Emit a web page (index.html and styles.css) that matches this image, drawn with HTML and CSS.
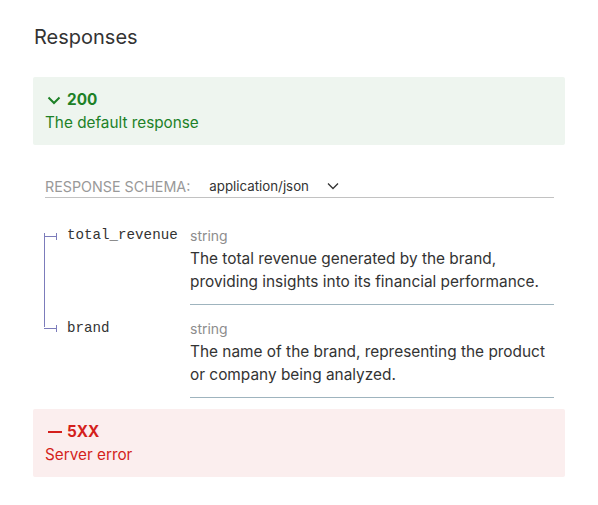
FILE: index.html
```html
<!DOCTYPE html>
<html>
<head>
<meta charset="utf-8">
<link rel="stylesheet" href="styles.css">
</head>
<body>
<div class="page">
  <h3 class="title">Responses</h3>

  <div class="resp resp-ok">
    <div class="resp-head">
      <svg class="resp-icon" width="14" height="9" viewBox="0 0 14 9"><path d="M1.5 1.5 L7 7 L12.5 1.5" fill="none" stroke="#1d8127" stroke-width="2"/></svg>
      <strong>200</strong>
    </div>
    <div class="resp-desc">The default response</div>
  </div>

  <div class="schema">
    <div class="schema-bar">
      <span class="schema-label">RESPONSE SCHEMA:</span>
      <span class="schema-type">application/json</span>
      <svg class="schema-caret" width="12" height="8" viewBox="0 0 12 8"><path d="M1 1.5 L6 6.5 L11 1.5" fill="none" stroke="#333" stroke-width="1.3"/></svg>
    </div>

    <table class="props">
      <tr class="prop first">
        <td class="prop-name"><span class="bullet"></span><span class="name">total_revenue</span></td>
        <td class="prop-info">
          <div class="type">string</div>
          <div class="desc">The total revenue generated by the brand, providing insights into its financial performance.</div>
        </td>
      </tr>
      <tr class="prop last">
        <td class="prop-name"><span class="bullet"></span><span class="name">brand</span></td>
        <td class="prop-info">
          <div class="type">string</div>
          <div class="desc">The name of the brand, representing the product or company being analyzed.</div>
        </td>
      </tr>
    </table>
  </div>

  <div class="resp resp-err">
    <div class="resp-head">
      <span class="dash"></span>
      <strong>5XX</strong>
    </div>
    <div class="resp-desc">Server error</div>
  </div>
</div>
</body>
</html>
```

FILE: styles.css
```css
html, body {
  margin: 0;
  padding: 0;
  background: #fff;
}
body {
  font-family: Inter, "Noto Sans", sans-serif;
  color: #333;
}
.page {
  padding: 22px 33px 20px 33px;
}
.title {
  margin: 0 0 25px 1px;
  font-size: 20px;
  line-height: 30px;
  font-weight: 400;
  color: #333;
}
.resp {
  border-radius: 2px;
  padding: 12px 12px 11px 12px;
  font-size: 15.3px;
  line-height: 23px;
}
.resp-ok {
  background: #eef5ef;
  color: #1d8127;
}
.resp-err {
  background: #fbeeee;
  color: #d41f1c;
  margin-top: 11px;
}
.resp-head {
  display: flex;
  align-items: center;
  line-height: 22px;
}
.resp-head strong {
  font-weight: 700;
}
.resp-icon {
  margin: 0 6px 0 2px;
}
.dash {
  display: inline-block;
  width: 14px;
  height: 2px;
  background: #d41f1c;
  margin: 0 5px 0 3px;
}
.schema {
  padding: 0 11px 0 12px;
  margin-top: 30px;
}
.schema-bar {
  display: flex;
  align-items: center;
  height: 22px;
  border-bottom: 1px solid #c2c2c2;
}
.schema-label {
  font-size: 14.3px;
  color: #999;
  text-transform: uppercase;
}
.schema-type {
  font-size: 13.3px;
  color: #333;
  margin-left: 19px;
}
.schema-caret {
  margin-left: 18px;
}
.props {
  border-collapse: collapse;
  border-spacing: 0;
  width: 100%;
  margin-top: 14px;
}
.prop-name {
  position: relative;
  vertical-align: top;
  width: 145px;
  padding: 11px 0 0 0;
  white-space: nowrap;
  line-height: 20px;
}
.prop-name::before {
  content: "";
  position: absolute;
  left: -1px;
  width: 1px;
  background: #7c7cbb;
}
.first .prop-name::before {
  top: 21px;
  bottom: 0;
}
.last .prop-name::before {
  top: 0;
  height: 22px;
}
.bullet {
  display: inline-block;
  vertical-align: middle;
  margin-left: -1px;
  margin-right: 10px;
}
.bullet::before {
  content: "";
  display: inline-block;
  vertical-align: middle;
  width: 12px;
  height: 1px;
  background: #7c7cbb;
}
.bullet::after {
  content: "";
  display: inline-block;
  vertical-align: middle;
  width: 1px;
  height: 7px;
  background: #7c7cbb;
}
.name {
  font-family: "Liberation Mono", monospace;
  font-size: 14.2px;
  color: #333;
  vertical-align: middle;
}
.prop-info {
  vertical-align: top;
  padding: 13px 0 11px 0;
  border-bottom: 1px solid #9fb4be;
}
.type {
  font-size: 14px;
  line-height: 22px;
  color: #8d8d8d;
}
.desc {
  font-size: 15.4px;
  line-height: 23px;
  color: #333;
}
```
